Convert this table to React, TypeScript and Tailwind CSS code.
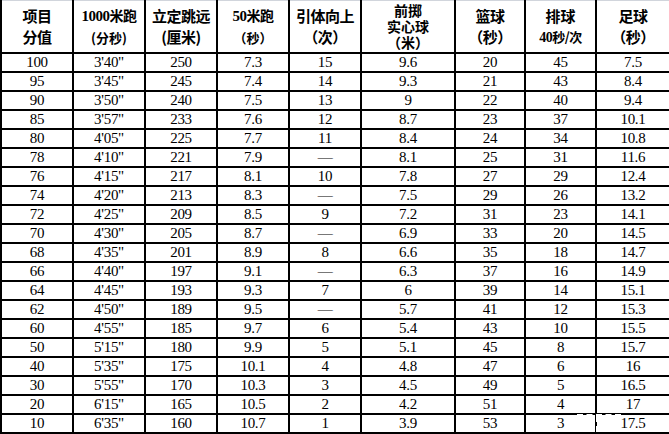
import React from "react";

const rows: string[][] = [
  ["100", "3'40\"", "250", "7.3", "15", "9.6", "20", "45", "7.5"],
  ["95", "3'45\"", "245", "7.4", "14", "9.3", "21", "43", "8.4"],
  ["90", "3'50\"", "240", "7.5", "13", "9", "22", "40", "9.4"],
  ["85", "3'57\"", "233", "7.6", "12", "8.7", "23", "37", "10.1"],
  ["80", "4'05\"", "225", "7.7", "11", "8.4", "24", "34", "10.8"],
  ["78", "4'10\"", "221", "7.9", "—", "8.1", "25", "31", "11.6"],
  ["76", "4'15\"", "217", "8.1", "10", "7.8", "27", "29", "12.4"],
  ["74", "4'20\"", "213", "8.3", "—", "7.5", "29", "26", "13.2"],
  ["72", "4'25\"", "209", "8.5", "9", "7.2", "31", "23", "14.1"],
  ["70", "4'30\"", "205", "8.7", "—", "6.9", "33", "20", "14.5"],
  ["68", "4'35\"", "201", "8.9", "8", "6.6", "35", "18", "14.7"],
  ["66", "4'40\"", "197", "9.1", "—", "6.3", "37", "16", "14.9"],
  ["64", "4'45\"", "193", "9.3", "7", "6", "39", "14", "15.1"],
  ["62", "4'50\"", "189", "9.5", "—", "5.7", "41", "12", "15.3"],
  ["60", "4'55\"", "185", "9.7", "6", "5.4", "43", "10", "15.5"],
  ["50", "5'15\"", "180", "9.9", "5", "5.1", "45", "8", "15.7"],
  ["40", "5'35\"", "175", "10.1", "4", "4.8", "47", "6", "16"],
  ["30", "5'55\"", "170", "10.3", "3", "4.5", "49", "5", "16.5"],
  ["20", "6'15\"", "165", "10.5", "2", "4.2", "51", "4", "17"],
  ["10", "6'35\"", "160", "10.7", "1", "3.9", "53", "3", "17.5"],
];

const widths = [72, 72, 72, 72, 72, 94, 70, 71, 74];

const cjk = "font-['Noto_Sans_CJK_SC',sans-serif] font-bold";
const serifB = "font-['Liberation_Serif','Noto_Sans_CJK_SC',serif] font-bold";

function H2({ a, b, small }: { a: React.ReactNode; b: React.ReactNode; small?: boolean }) {
  return (
    <div className="flex flex-col items-center leading-[21px]">
      <span className={`${cjk} text-[15px] tracking-[-0.5px]`}>{a}</span>
      <span className={small ? `${cjk} text-[13px]` : `${cjk} text-[15px] tracking-[-0.5px]`}>{b}</span>
    </div>
  );
}

export default function App() {
  return (
    <div className="w-[669px] h-[434px] bg-white overflow-hidden relative text-black">
      <table className="table-fixed border-collapse w-[669px] border-t border-t-gray-300">
        <colgroup>
          {widths.map((w, i) => (
            <col key={i} style={{ width: w }} />
          ))}
        </colgroup>
        <thead>
          <tr className="h-[52px]">
            <th className="border-2 border-black border-t-gray-300 border-t p-0 font-normal">
              <H2 a="项目" b="分值" />
            </th>
            <th className="border-2 border-black border-t-gray-300 border-t p-0 font-normal">
              <div className="flex flex-col items-center leading-[21px]">
                <span className={`${serifB} text-[15px] tracking-[-0.5px]`}>
                  1000<span className={`${cjk} text-[14px]`}>米跑</span>
                </span>
                <span className={`${cjk} text-[13px]`}>(分秒)</span>
              </div>
            </th>
            <th className="border-2 border-black border-t-gray-300 border-t p-0 font-normal">
              <H2 a="立定跳远" b="(厘米)" />
            </th>
            <th className="border-2 border-black border-t-gray-300 border-t p-0 font-normal">
              <div className="flex flex-col items-center leading-[21px]">
                <span className={`${serifB} text-[15px] tracking-[-0.5px]`}>
                  50<span className={`${cjk} text-[14px]`}>米跑</span>
                </span>
                <span className={`${cjk} text-[13px]`}>（秒）</span>
              </div>
            </th>
            <th className="border-2 border-black border-t-gray-300 border-t p-0 font-normal">
              <H2 a="引体向上" b="（次）" />
            </th>
            <th className="border-2 border-black border-t-gray-300 border-t p-0 font-normal">
              <div className="flex flex-col items-center">
                <span className={`${cjk} text-[14px] leading-[16px]`}>前掷</span>
                <span className={`${cjk} text-[14px] leading-[16px]`}>实心球</span>
                <span className={`${cjk} text-[14px] leading-[16px]`}>（米）</span>
              </div>
            </th>
            <th className="border-2 border-black border-t-gray-300 border-t p-0 font-normal">
              <H2 a="篮球" b="（秒）" />
            </th>
            <th className="border-2 border-black border-t-gray-300 border-t p-0 font-normal">
              <div className="flex flex-col items-center leading-[21px]">
                <span className={`${cjk} text-[15px]`}>排球</span>
                <span className={`${serifB} text-[14px] tracking-[-0.5px]`}>
                  40<span className={`${cjk} text-[13px]`}>秒/次</span>
                </span>
              </div>
            </th>
            <th className="border-2 border-black border-t-gray-300 border-t p-0 font-normal">
              <H2 a="足球" b="（秒）" />
            </th>
          </tr>
        </thead>
        <tbody>
          {rows.map((r, i) => (
            <tr key={i} className="h-[19px]">
              {r.map((c, j) => (
                <td
                  key={j}
                  className="border-2 border-black p-0 text-center align-middle font-['Liberation_Serif',serif] text-[15px] leading-[15px] tracking-[-0.3px]"
                >
                  {c}
                </td>
              ))}
            </tr>
          ))}
        </tbody>
      </table>
      <div className="absolute left-[577px] top-[414px] w-[44px] border-t-2 border-dashed border-white" />
      <div className="absolute left-[596px] top-[416px] h-[16px] border-l-2 border-dashed border-white" />
    </div>
  );
}
